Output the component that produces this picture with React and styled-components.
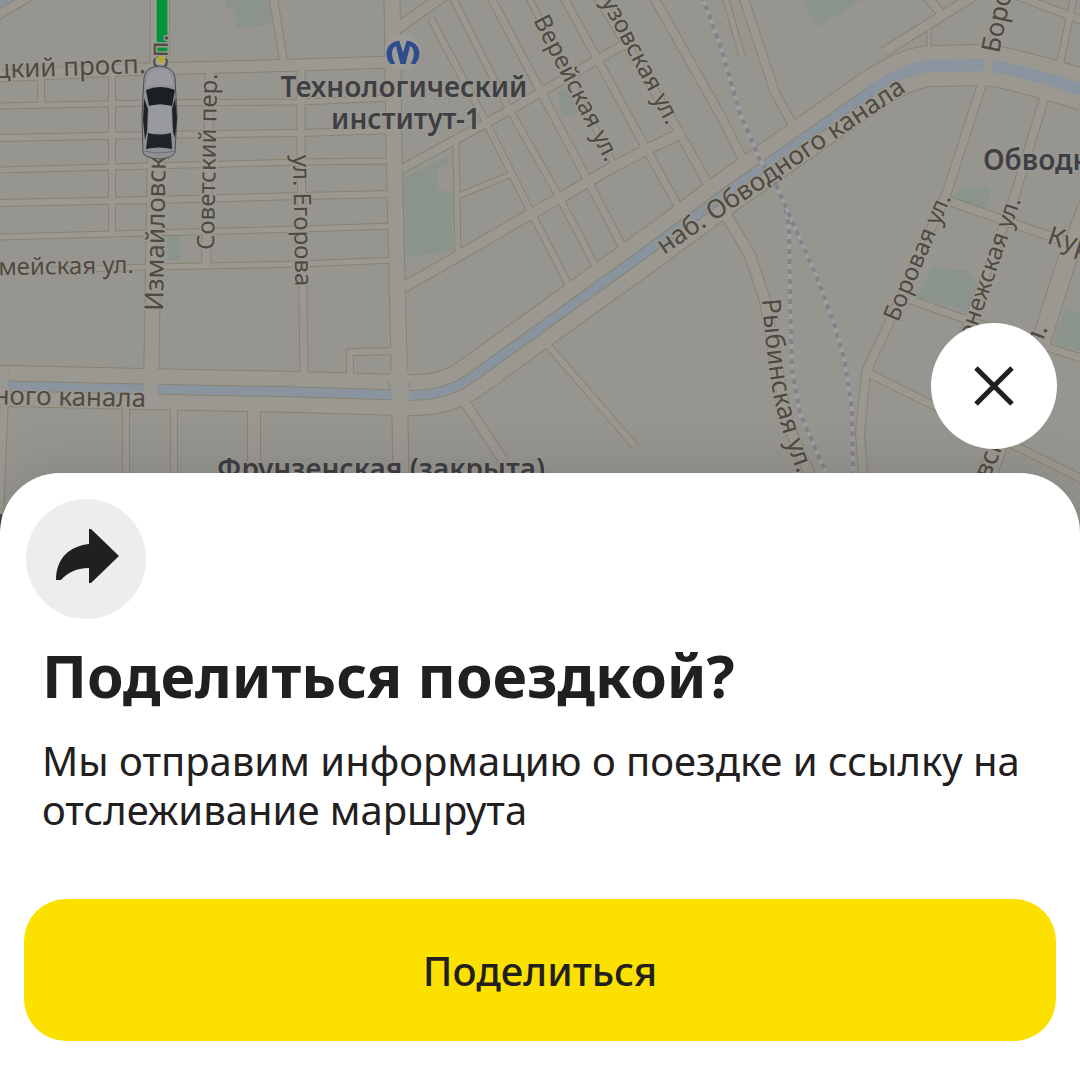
import React from "react";
import styled, { createGlobalStyle } from "styled-components";

const GlobalStyle = createGlobalStyle`
  *, *::before, *::after { box-sizing: border-box; }
  body { margin: 0; background: #ffffff; }
`;

const sans = `"Noto Sans", "Open Sans", "Liberation Sans", sans-serif`;

const Screen = styled.main`
  position: relative;
  display: flex;
  flex-direction: column;
  justify-content: flex-end;
  min-height: 100vh;
  overflow: hidden;
  font-family: ${sans};
  color: #21201f;
`;

const MapBackdrop = styled.svg`
  position: absolute;
  top: 0;
  left: 0;
  width: 100%;
  height: 560px;
  background: #969590;
  font-family: ${sans};
`;

const StreetLabel = styled.text`
  font-size: ${(p) => (p.$small ? 24 : 26)}px;
  fill: #4f4a41;
  stroke: #9b9892;
  stroke-width: 3px;
  stroke-linejoin: round;
  paint-order: stroke;
`;

const StationLabel = styled.text`
  font-size: 28px;
  font-weight: 600;
  fill: #3f3f43;
  stroke: #9b9892;
  stroke-width: 3px;
  stroke-linejoin: round;
  paint-order: stroke;
`;

const CloseButton = styled.button`
  position: relative;
  z-index: 1;
  display: grid;
  place-items: center;
  align-self: flex-end;
  width: 126px;
  height: 126px;
  margin: 0 23px 24px;
  padding: 0;
  border: 0;
  border-radius: 50%;
  background: #ffffff;
  color: #21201f;
  cursor: pointer;
`;

const Sheet = styled.section`
  position: relative;
  display: flex;
  flex-direction: column;
  padding: 26px 24px 51px;
  border-radius: 60px 60px 0 0;
  background: #ffffff;
  box-shadow: 0 0 60px rgba(0, 0, 0, 0.14);
`;

const IconBadge = styled.div`
  display: grid;
  place-items: center;
  width: 120px;
  height: 120px;
  margin-left: 2px;
  border-radius: 50%;
  background: #ededed;
`;

const Copy = styled.div`
  display: flex;
  flex-direction: column;
  gap: 25px;
  padding: 20px 18px 65px;
`;

const Title = styled.h1`
  margin: 0;
  font-size: 59px;
  line-height: 72px;
  font-weight: 700;
`;

const Description = styled.p`
  margin: 0;
  font-size: 40px;
  line-height: 49px;
`;

const PrimaryButton = styled.button`
  height: 142px;
  border: 0;
  border-radius: 42px;
  background: #fce000;
  color: #21201f;
  font-family: inherit;
  font-size: 40px;
  font-weight: 500;
  cursor: pointer;
`;

/* [width, path] for every street */
const streets = [
  [18, "M160 -4 L159 160"],
  [14, "M155 150 L151 390"],
  [11, "M-4 76 L145 69 L300 65 L392 62"],
  [5, "M-4 106 L150 103 L300 102 L392 98"],
  [6, "M-4 138 L150 135 L300 133 L394 130"],
  [5, "M-4 170 L150 166 L300 162 L394 161"],
  [6, "M-4 203 L150 200 L300 196 L394 194"],
  [5, "M-4 237 L150 233 L300 229 L395 226"],
  [5, "M-4 272 L150 267 L300 264 L396 260"],
  [6, "M41 76 L41 106"],
  [6, "M112 72 L112 236"],
  [8, "M210 70 L206 264"],
  [7, "M301 68 L301 150 L304 374"],
  [7, "M273 -4 L284 64"],
  [15, "M392 -4 L394 150 L399 360 L401 480"],
  [10, "M396 29 L446 -6"],
  [6, "M431 19 L484 118 L530 210 L568 284"],
  [6, "M452 -4 L508 107 L557 193 L597 269"],
  [7, "M490 -4 L540 90 L586 177 L622 246"],
  [7, "M563 -4 L598 60 L643 143 L678 206"],
  [5, "M528 -4 L613 163"],
  [8, "M594 -10 L675 125 L708 184"],
  [8, "M653 -4 L722 118 L742 158"],
  [5, "M725 -4 L742 56"],
  [8, "M743 -4 L774 90 L792 124"],
  [8, "M402 169 L510 110 L597 60 L628 42"],
  [5, "M456 143 L458 258"],
  [5, "M458 196 L512 174"],
  [10, "M404 287 L460 255 L527 216 L560 198 L613 167 L650 148 L684 132"],
  [7, "M4 405 L-1 530"],
  [6, "M126 408 L126 484"],
  [6, "M174 408 L174 484"],
  [12, "M254 408 L254 484"],
  [9, "M462 398 L503 460"],
  [6, "M545 342 L635 446"],
  [6, "M350 378 L350 352 L398 351"],
  [10, "M722 208 L750 255 L765 300 L775 360 L790 430 L814 484"],
  [8, "M1004 -4 L988 66 L946 195 L888 325 L866 372 L860 433 L864 484"],
  [7, "M866 372 L1084 480"],
  [7, "M905 298 L968 320 L1053 349 L1084 359"],
  [8, "M946 200 L1060 240 L1084 248"],
  [8, "M1046 92 L1015 195 L960 345"],
  [18, "M1098 180 L1067 260 L1040 345 L1000 440 L984 484"],
  [9, "M884 52 L980 -8"],
  [8, "M926 -4 L945 18"],
  [3, "M929 25 L929 46"],
  [7, "M1012 -6 L1084 21"],
  [6, "M1074 -4 L1070 16 L1060 64"],
];

const canal =
  "M8 386 L144 389 L300 392 L400 395 Q432 397 455 387 Q465 383 486 367 L650 249 L730 190 L870 92 Q905 68 930 66 L987 65 Q1020 70 1084 90";

const railways = [
  "M702 -4 L720 45 L740 113 L760 160 L776 185 Q788 210 789 230 L790 293 L792 370 L800 413 L830 482",
  "M776 185 L793 223 L818 280 L835 327 L845 363 L852 410 L853 482",
];

const parks = [
  "M404 178 L448 155 L448 166 L437 168 L437 190 L453 192 L453 251 L407 257 Z",
  "M558 93 L566 88 L578 112 L562 118 Z",
  "M224 -2 L271 -2 L271 24 L237 29 L235 10 L227 7 Z",
  "M168 235 L180 235 L180 260 L167 260 Z",
  "M800 -2 L865 -2 L817 27 Z",
  "M953 195 L965 187 L990 188 L987 210 L953 202 Z",
  "M933 265 L950 270 L967 270 L977 280 L968 312 L917 297 Z",
  "M1065 310 L1084 313 L1084 352 L1053 343 Z",
];

function CityMap() {
  return (
    <MapBackdrop viewBox="0 0 1080 560" preserveAspectRatio="xMidYMin slice" aria-hidden="true">
      <g fill="#8b948c">
        {parks.map((d) => (
          <path key={d} d={d} />
        ))}
      </g>
      <path d="M0 0 H16 L0 8 Z" fill="#8a939e" />
      <g fill="none" strokeLinejoin="round">
        <path d="M-4 16 L34 -6" stroke="#878370" strokeWidth="10" />
        <g stroke="#878370">
          {streets.map(([w, d]) => (
            <path key={d} d={d} strokeWidth={w + 2} />
          ))}
          <path d="M-10 386 L8 386" strokeWidth="42" />
          <path d={canal} strokeWidth="42" />
        </g>
        <path d="M-4 16 L34 -6" stroke="#9b9892" strokeWidth="8" />
        <g stroke="#9b9892">
          <path d="M-10 386 L8 386" strokeWidth="40" />
          <path d={canal} strokeWidth="40" />
          {streets.map(([w, d]) => (
            <path key={d} d={d} strokeWidth={w} />
          ))}
        </g>
        <path d={canal} stroke="#878370" strokeWidth="11" />
        <path d={canal} stroke="#8a949e" strokeWidth="9" />
        <path d="M870 92 Q905 68 930 66 L987 65 Q1020 70 1084 90" stroke="#8a949e" strokeWidth="12" />
        <g stroke="#9b9892">
          <path d="M151 376 L151 404" strokeWidth="14" />
          <path d="M399 370 L401 414" strokeWidth="17" />
          <path d="M991 48 L985 84" strokeWidth="8" />
        </g>
        {railways.map((d) => (
          <g key={d}>
            <path d={d} stroke="#9f9ea0" strokeWidth="4" />
            <path d={d} stroke="#828288" strokeWidth="4" strokeDasharray="5 5" />
          </g>
        ))}
        <g stroke="#827e74" strokeWidth="1">
          <path d="M388 382 q4 4 0 7 M411 382 q-4 4 0 7 M395 384 h2 M401 390 h2" />
        </g>
      </g>

      <path d="M162 -2 V64" stroke="#a3aba0" strokeWidth="13" />
      <path d="M162 -2 V58" stroke="#079339" strokeWidth="11" />
      <path d="M158 56 h8 v3 a4 4 0 0 1 -8 0 Z" fill="#b5a81f" />

      <StreetLabel transform="translate(146 73) rotate(-2)" textAnchor="end">Троицкий просп.</StreetLabel>
      <StreetLabel transform="translate(134 273) rotate(-1)" textAnchor="end" $small>Красноармейская ул.</StreetLabel>
      <StreetLabel transform="translate(146 407) rotate(1)" textAnchor="end">наб. Обводного канала</StreetLabel>
      <StreetLabel transform="translate(163 311) rotate(-89)">Измайловский просп.</StreetLabel>
      <StreetLabel transform="translate(214 250) rotate(-89)" $small>Советский пер.</StreetLabel>
      <StreetLabel transform="translate(293 155) rotate(89)" $small>ул. Егорова</StreetLabel>
      <StreetLabel transform="translate(533 20) rotate(63)" $small>Верейская ул.</StreetLabel>
      <StreetLabel transform="translate(667 126) rotate(62)" textAnchor="end" $small>Рузовская ул.</StreetLabel>
      <StreetLabel transform="translate(664 255) rotate(-34)">наб. Обводного канала</StreetLabel>
      <StreetLabel>
        <textPath href="#rybinskaya">Рыбинская ул.</textPath>
      </StreetLabel>
      <StreetLabel transform="translate(898 323) rotate(-67)" $small>Боровая ул.</StreetLabel>
      <StreetLabel transform="translate(999 54) rotate(-78)">Боровая ул.</StreetLabel>
      <StreetLabel transform="translate(1021 200) rotate(-71)" textAnchor="end" $small>Воронежская ул.</StreetLabel>
      <StreetLabel transform="translate(1048 328) rotate(-69)" textAnchor="end">Лиговский просп.</StreetLabel>
      <StreetLabel transform="translate(1046 243) rotate(18)">Курская ул.</StreetLabel>
      <defs>
        <path id="rybinskaya" d="M762 299 Q766 353 772 388 Q780 433 806 494" />
      </defs>

      <StationLabel textAnchor="middle">
        <tspan x="404" y="97">Технологический</tspan>
        <tspan x="406" y="129">институт-1</tspan>
      </StationLabel>
      <StationLabel x="983" y="170">Обводный канал</StationLabel>
      <StationLabel x="381" y="479" textAnchor="middle">Фрунзенская (закрыта)</StationLabel>
      <StationLabel x="4" y="530" textAnchor="end">Балтийский</StationLabel>

      <circle cx="403" cy="52" r="18" fill="#9d9b96" />
      <path
        transform="translate(360 0) scale(0.3333)"
        d="M92 192 C68 165 80 124 118 122 L129 158 L140 122 C178 124 190 165 166 192 L152 192 C168 166 162 142 150 138 L137 192 L121 192 L108 138 C96 142 90 166 106 192 Z"
        fill="#2f4c8d"
      />

      <g>
        <path d="M144 78 Q145 67 159 66 Q174 67 175 78 L177 115 L175 152 Q174 158 159 159 Q144 158 143 152 L142 115 Z" fill="#8f9096" stroke="#4c4c52" strokeWidth="1" />
        <path d="M147 78 Q149 69 159 69 Q170 69 172 78 L174 87 Q159 82 146 88 Z" fill="#999a9f" />
        <path d="M146 90 Q160 84 175 90 L172 106 Q160 103 149 106 Z" fill="#1b1f20" />
        <path d="M149 106 Q160 103 171 106 L172 133 H149 Z" fill="#999a9f" />
        <path d="M148 133 Q160 136 171 133 L172 149 Q159 146 146 149 Z" fill="#1f2526" />
        <path d="M144 98 L148 109 L147 132 L145 140 L143 120 Z M175 98 L172 109 L173 132 L175 138 L177 118 Z" fill="#202326" />
        <path d="M145 151 Q159 155 174 151" fill="none" stroke="#6d6e74" strokeWidth="1" />
      </g>
    </MapBackdrop>
  );
}

export default function App() {
  return (
    <>
      <GlobalStyle />
      <Screen>
        <CityMap />
        <CloseButton type="button" aria-label="Закрыть">
          <svg width="42" height="42" viewBox="0 0 42 42" fill="none" stroke="currentColor" strokeWidth="5" aria-hidden="true">
            <path d="M3 3 L39 39 M39 3 L3 39" />
          </svg>
        </CloseButton>
        <Sheet aria-labelledby="share-title">
          <IconBadge>
            <svg width="66" height="60" viewBox="0 0 66 60" fill="#21201f" aria-hidden="true">
              <path d="M36 0 H38 L66 27 L38 54 H36 V39 C23 39 14 44 8 51 H3 C3 29 17 17 36 15 Z" />
            </svg>
          </IconBadge>
          <Copy>
            <Title id="share-title">Поделиться поездкой?</Title>
            <Description>Мы отправим информацию о поездке и ссылку на отслеживание маршрута</Description>
          </Copy>
          <PrimaryButton type="button">Поделиться</PrimaryButton>
        </Sheet>
      </Screen>
    </>
  );
}
